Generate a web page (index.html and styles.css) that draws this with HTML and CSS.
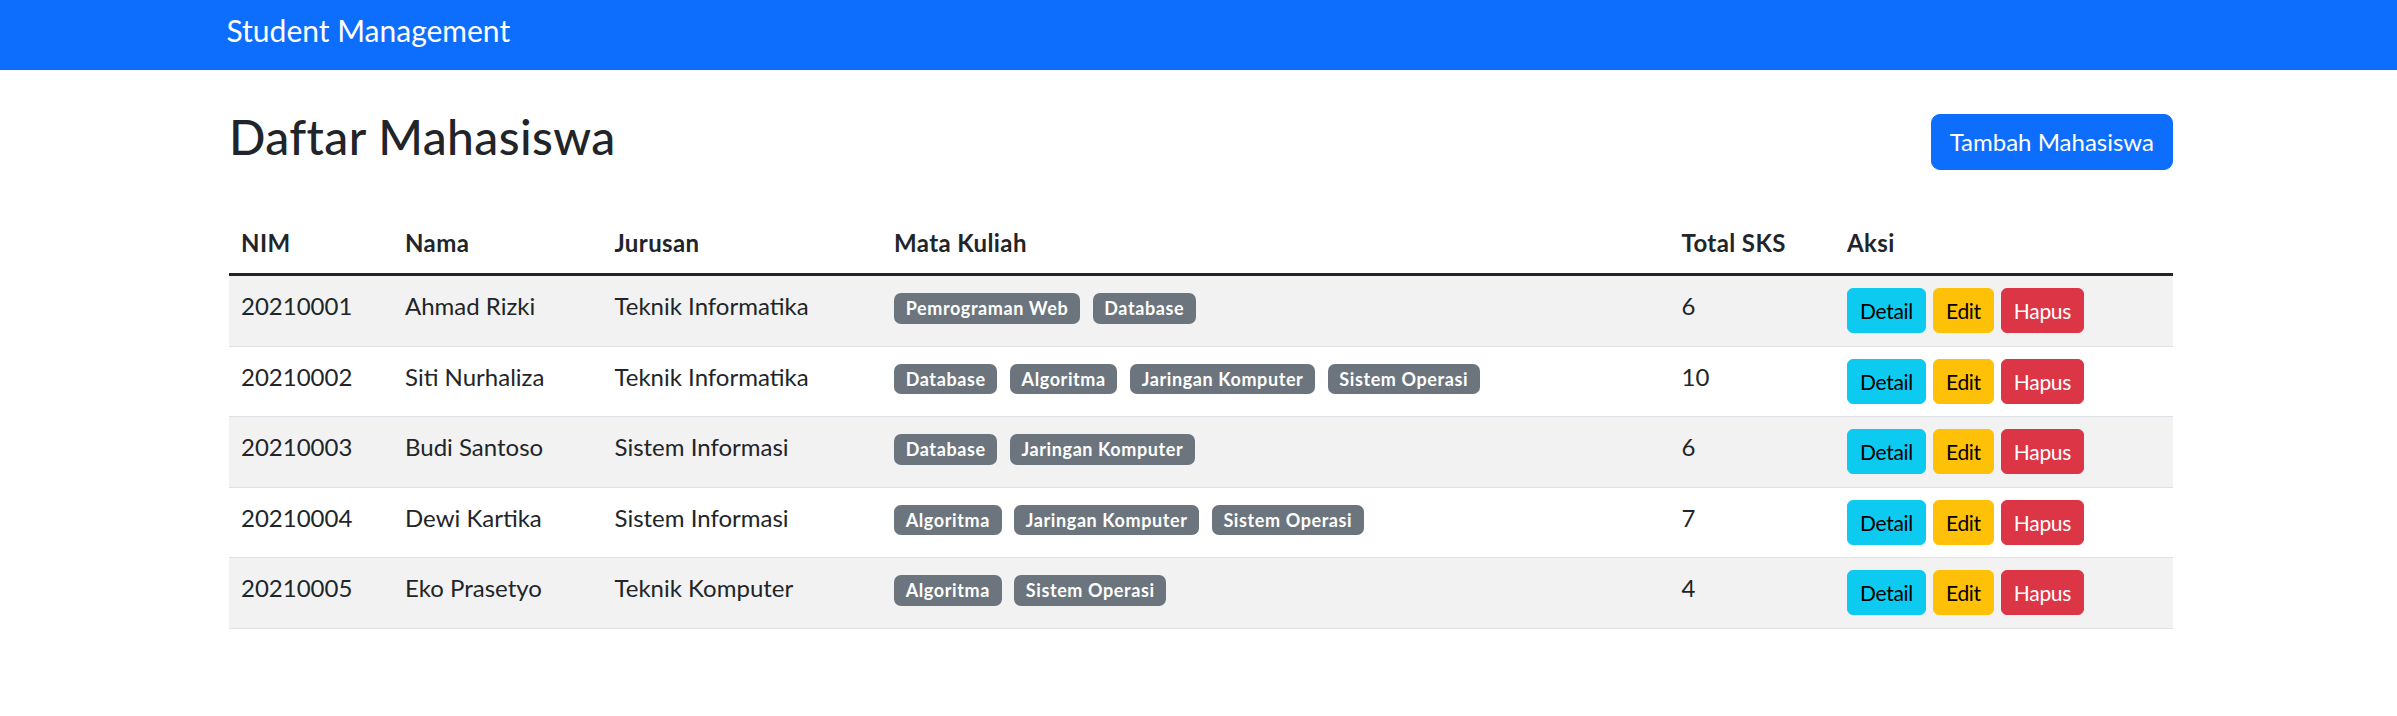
FILE: index.html
```html
<!DOCTYPE html>
<html lang="id">
<head>
<meta charset="utf-8">
<title>Student Management</title>
<link rel="stylesheet" href="styles.css">
</head>
<body>
<nav class="navbar">
  <div class="container">
    <span class="brand">Student Management</span>
  </div>
</nav>
<main class="container page">
  <div class="page-head">
    <h2 class="title">Daftar Mahasiswa</h2>
    <a class="btn btn-primary" href="#">Tambah Mahasiswa</a>
  </div>
  <table class="table">
    <colgroup>
      <col class="c-nim"><col class="c-nama"><col class="c-jur"><col class="c-mk"><col class="c-sks"><col class="c-aksi">
    </colgroup>
    <thead>
      <tr><th>NIM</th><th>Nama</th><th>Jurusan</th><th>Mata Kuliah</th><th>Total SKS</th><th>Aksi</th></tr>
    </thead>
    <tbody>
      <tr class="odd">
        <td>20210001</td><td>Ahmad Rizki</td><td>Teknik Informatika</td>
        <td><div class="badges"><span class="badge">Pemrograman Web</span><span class="badge">Database</span></div></td>
        <td>6</td>
        <td><div class="actions"><a class="btn-sm btn-info" href="#">Detail</a><a class="btn-sm btn-warning" href="#">Edit</a><a class="btn-sm btn-danger" href="#">Hapus</a></div></td>
      </tr>
      <tr>
        <td>20210002</td><td>Siti Nurhaliza</td><td>Teknik Informatika</td>
        <td><div class="badges"><span class="badge">Database</span><span class="badge">Algoritma</span><span class="badge">Jaringan Komputer</span><span class="badge">Sistem Operasi</span></div></td>
        <td>10</td>
        <td><div class="actions"><a class="btn-sm btn-info" href="#">Detail</a><a class="btn-sm btn-warning" href="#">Edit</a><a class="btn-sm btn-danger" href="#">Hapus</a></div></td>
      </tr>
      <tr class="odd">
        <td>20210003</td><td>Budi Santoso</td><td>Sistem Informasi</td>
        <td><div class="badges"><span class="badge">Database</span><span class="badge">Jaringan Komputer</span></div></td>
        <td>6</td>
        <td><div class="actions"><a class="btn-sm btn-info" href="#">Detail</a><a class="btn-sm btn-warning" href="#">Edit</a><a class="btn-sm btn-danger" href="#">Hapus</a></div></td>
      </tr>
      <tr>
        <td>20210004</td><td>Dewi Kartika</td><td>Sistem Informasi</td>
        <td><div class="badges"><span class="badge">Algoritma</span><span class="badge">Jaringan Komputer</span><span class="badge">Sistem Operasi</span></div></td>
        <td>7</td>
        <td><div class="actions"><a class="btn-sm btn-info" href="#">Detail</a><a class="btn-sm btn-warning" href="#">Edit</a><a class="btn-sm btn-danger" href="#">Hapus</a></div></td>
      </tr>
      <tr class="odd">
        <td>20210005</td><td>Eko Prasetyo</td><td>Teknik Komputer</td>
        <td><div class="badges"><span class="badge">Algoritma</span><span class="badge">Sistem Operasi</span></div></td>
        <td>4</td>
        <td><div class="actions"><a class="btn-sm btn-info" href="#">Detail</a><a class="btn-sm btn-warning" href="#">Edit</a><a class="btn-sm btn-danger" href="#">Hapus</a></div></td>
      </tr>
    </tbody>
  </table>
</main>
</body>
</html>
```
FILE: styles.css
```css
* { box-sizing: border-box; }

html, body {
  margin: 0;
  background: #fff;
}

body {
  padding-left: 5px;
  font-family: "Lato", "Liberation Sans", sans-serif;
  font-size: 24px;
  line-height: 36px;
  color: #212529;
}

.container {
  width: 1944px;
  margin-left: auto;
  margin-right: auto;
}

.navbar {
  height: 70px;
  margin-left: -5px;
  padding-top: 8px;
  background: #0d6efd;
}

.brand {
  display: block;
  font-size: 30px;
  line-height: 45px;
  color: #fff;
}

.page {
  padding-top: 38px;
}

.page-head {
  display: flex;
  justify-content: space-between;
  align-items: flex-start;
  margin-bottom: 43px;
}

.title {
  margin: 0;
  font-size: 48px;
  line-height: 57px;
  font-weight: 500;
  letter-spacing: 0.4px;
}

.btn {
  display: inline-block;
  margin-top: 6px;
  padding: 9px 18px;
  border: 1px solid #0d6efd;
  border-radius: 9px;
  font-size: 24px;
  line-height: 36px;
  text-decoration: none;
}

.btn-primary {
  background: #0d6efd;
  color: #fff;
}

.table {
  width: 1944px;
  border-collapse: collapse;
  table-layout: fixed;
}

.c-nim { width: 164px; }
.c-nama { width: 209.5px; }
.c-jur { width: 279.5px; }
.c-mk { width: 787.5px; }
.c-sks { width: 165.5px; }
.c-aksi { width: 338px; }

.table th,
.table td {
  padding: 12px;
  text-align: left;
  vertical-align: top;
}

.table th {
  font-weight: 700;
  letter-spacing: 0.4px;
  border-bottom: 3px solid #212529;
}

.table td {
  padding-bottom: 12.5px;
  border-bottom: 1px solid #dee2e6;
}

.table tr.odd td {
  background: #f2f2f2;
}

.badges {
  display: flex;
  gap: 12.5px;
  margin-top: 5px;
}

.badge {
  display: block;
  padding: 6.35px 11.7px;
  border-radius: 7px;
  background: #6c757d;
  color: #fff;
  font-size: 18px;
  line-height: 18px;
  font-weight: 700;
  letter-spacing: 0.6px;
  white-space: nowrap;
}

.actions {
  display: flex;
  gap: 7px;
}

.btn-sm {
  display: block;
  padding: 6px 12px;
  border: 1px solid transparent;
  border-radius: 6px;
  font-size: 21px;
  line-height: 31px;
  letter-spacing: -0.3px;
  text-decoration: none;
}

.btn-info {
  background: #0dcaf0;
  border-color: #0dcaf0;
  color: #000;
}

.btn-warning {
  background: #ffc107;
  border-color: #ffc107;
  color: #000;
}

.btn-danger {
  background: #dc3545;
  border-color: #dc3545;
  color: #fff;
}
```
